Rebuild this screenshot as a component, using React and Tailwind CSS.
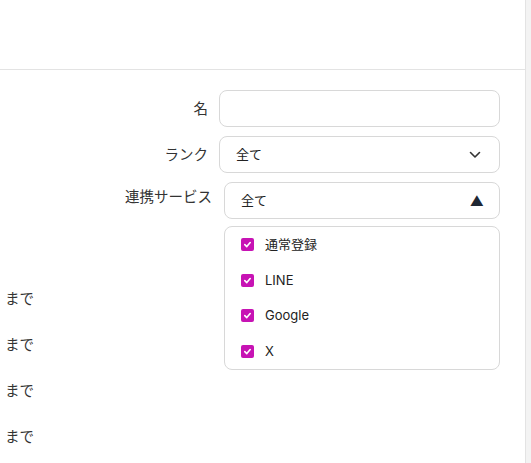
import React from "react";

const font = { fontFamily: 'Inter, "Noto Sans CJK JP", sans-serif' };

function Check({ label }) {
  return (
    <div className="flex items-center h-[36.5px] pl-[16px]">
      <span className="w-[13px] h-[13px] rounded-[2px] bg-[#c713b4] flex items-center justify-center">
        <svg width="9" height="9" viewBox="0 0 10 10" fill="none">
          <path d="M2 5.2 L4.2 7.3 L8 2.8" stroke="white" strokeWidth="1.8" strokeLinecap="round" strokeLinejoin="round" />
        </svg>
      </span>
      <span className="ml-[11px] text-[13px] text-[#222]">{label}</span>
    </div>
  );
}

export default function App() {
  return (
    <div className="flex w-[531px] h-[463px] bg-white overflow-hidden" style={font}>
      <div className="w-[526px] border-r border-[#e3e3e3] flex flex-col">
        <div className="h-[70px] border-b border-[#e3e3e3] shrink-0" />
        <div className="flex flex-col pt-[20px] pr-[25px]">
          <div className="flex justify-end items-center">
            <span className="text-[14.5px] text-[#333] mr-[11px]">名</span>
            <div className="w-[281px] h-[37px] border border-[#d8d8d8] rounded-[8px]" />
          </div>
          <div className="flex justify-end items-center mt-[9px]">
            <span className="text-[14.5px] text-[#333] mr-[11px]">ランク</span>
            <div className="w-[281px] h-[37px] border border-[#d8d8d8] rounded-[8px] flex items-center justify-between pl-[16px] pr-[18px]">
              <span className="text-[13px] text-[#222]">全て</span>
              <svg width="12" height="8" viewBox="0 0 12 8" fill="none">
                <path d="M1.5 1.5 L6 6 L10.5 1.5" stroke="#333" strokeWidth="1.6" strokeLinecap="round" strokeLinejoin="round" />
              </svg>
            </div>
          </div>
          <div className="flex justify-end items-start mt-[9px] relative">
            <span className="text-[14.5px] text-[#333] mr-[12px] mt-[4px]">連携サービス</span>
            <div className="w-[276px] relative">
              <div className="h-[37px] border border-[#d8d8d8] rounded-[8px] flex items-center justify-between pl-[16px] pr-[15px]">
                <span className="text-[13px] text-[#222]">全て</span>
                <span className="text-[14px] text-[#1f2733] leading-none">▲</span>
              </div>
              <div className="absolute left-0 top-[44px] w-[276px] h-[144px] border border-[#d8d8d8] rounded-[8px] bg-white flex flex-col z-10">
                <Check label="通常登録" />
                <Check label="LINE" />
                <Check label="Google" />
                <Check label="X" />
              </div>
            </div>
          </div>
          <div className="flex flex-col mt-[57px] pl-[5px]">
            {[0, 1, 2, 3].map((i) => (
              <div key={i} className="h-[46px] flex items-center text-[14.5px] text-[#333]">まで</div>
            ))}
          </div>
        </div>
      </div>
      <div className="flex-1 bg-[#f3f3f3]" />
    </div>
  );
}
